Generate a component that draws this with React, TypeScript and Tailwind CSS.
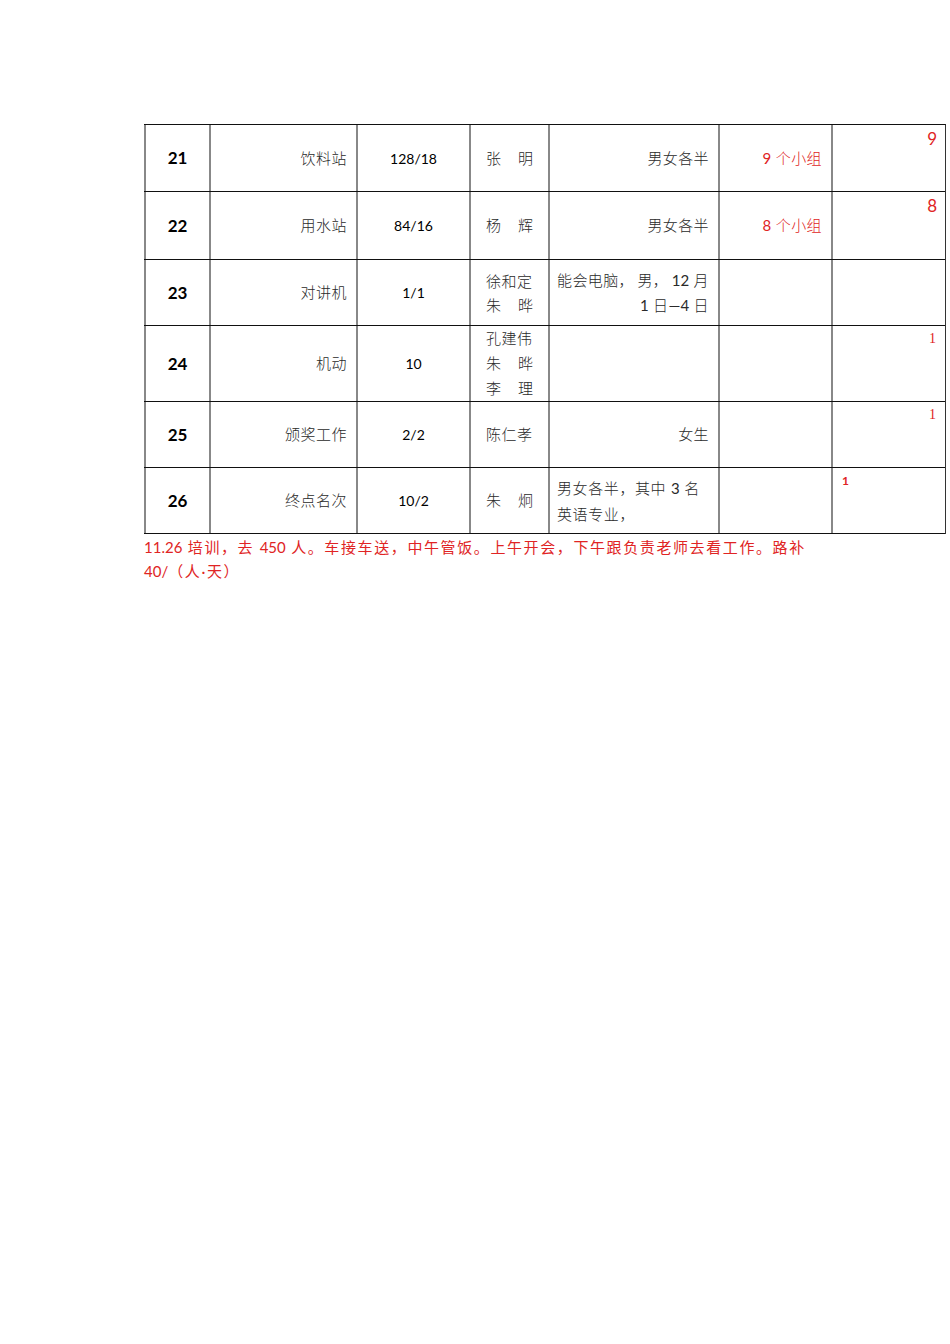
const CJK = "font-['Lato','Noto_Sans_CJK_SC',sans-serif]";

const cols = "grid grid-cols-[65px_147px_113px_79px_170px_113px_114px]";

function Name({ a, b }: { a: string; b?: string }) {
  if (!b) return <div className="w-[48px] tracking-[0.5px]">{a}</div>;
  return (
    <div className="flex w-[47px] justify-between">
      <span>{a}</span>
      <span>{b}</span>
    </div>
  );
}

// digits keep the regular weight and no extra tracking
function N({ children }: { children: React.ReactNode }) {
  return <span className="font-normal tracking-normal">{children}</span>;
}

type Row = {
  no: string;
  post: string;
  count: string;
  names: React.ReactNode;
  note: React.ReactNode;
  groups?: React.ReactNode;
  tag?: React.ReactNode;
  h: string;
};

const redNum = "pr-[8px] pt-[5px] text-right text-[17px] leading-none text-[#e02424]";
const redSerif =
  "pr-[9px] pt-[6px] text-right font-['Liberation_Serif',serif] text-[14px] leading-none text-[#e02424]";

const rows: Row[] = [
  {
    no: "21",
    post: "饮料站",
    count: "128/18",
    names: <Name a="张" b="明" />,
    note: <div className="text-right">男女各半</div>,
    groups: (
      <>
        <N>9</N> 个小组
      </>
    ),
    tag: <div className={redNum}>9</div>,
    h: "h-[67px]",
  },
  {
    no: "22",
    post: "用水站",
    count: "84/16",
    names: <Name a="杨" b="辉" />,
    note: <div className="text-right">男女各半</div>,
    groups: (
      <>
        <N>8</N> 个小组
      </>
    ),
    tag: <div className={redNum}>8</div>,
    h: "h-[68px]",
  },
  {
    no: "23",
    post: "对讲机",
    count: "1/1",
    names: (
      <div className="leading-[24px]">
        <Name a="徐和定" />
        <Name a="朱" b="晔" />
      </div>
    ),
    note: (
      <div className="leading-[25px]">
        <div className="flex justify-between">
          <span>能会电脑，</span>
          <span>男，</span>
          <span>
            <N>12</N> 月
          </span>
        </div>
        <div className="text-right">
          <N>1</N> 日<N>—4</N> 日
        </div>
      </div>
    ),
    h: "h-[66px]",
  },
  {
    no: "24",
    post: "机动",
    count: "10",
    names: (
      <div className="leading-[25px]">
        <Name a="孔建伟" />
        <Name a="朱" b="晔" />
        <Name a="李" b="理" />
      </div>
    ),
    note: null,
    tag: <div className={redSerif}>1</div>,
    h: "h-[76px]",
  },
  {
    no: "25",
    post: "颁奖工作",
    count: "2/2",
    names: <Name a="陈仁孝" />,
    note: <div className="text-right">女生</div>,
    tag: <div className={redSerif}>1</div>,
    h: "h-[66px]",
  },
  {
    no: "26",
    post: "终点名次",
    count: "10/2",
    names: <Name a="朱" b="炯" />,
    note: (
      <div className="leading-[26px] tracking-[0.6px]">
        <div>
          男女各半，其中 <N>3</N> 名
        </div>
        <div>英语专业，</div>
      </div>
    ),
    tag: <div className="pl-[9px] pt-[7px] text-[12px] font-bold leading-none text-[#e02424]">1</div>,
    h: "h-[66px]",
  },
];

export default function App() {
  return (
    <div className={`min-h-[1344px] w-[950px] bg-white pl-[144px] pt-[124px] text-[15px] text-[#2a2a2a] ${CJK}`}>
      <div className="w-[802px] border-t border-r border-t-[#111] border-r-[#333]">
        {rows.map((r) => (
          <div key={r.no} className={`${cols} ${r.h} border-b border-[#111]`}>
            <div className="flex items-center justify-center border-l-2 border-[#888] text-[17px] font-bold text-black">
              {r.no}
            </div>
            <div className="flex items-center justify-end border-l-2 border-[#888] pr-[9px] font-light tracking-[0.5px]">
              {r.post}
            </div>
            <div className="flex items-center justify-center border-l-2 border-[#888] text-[14px] text-black">
              {r.count}
            </div>
            <div className="flex items-center border-l-2 border-[#888] pl-[15px] font-light">{r.names}</div>
            <div className="flex items-center border-l-2 border-[#888] pl-[7px] pr-[9px] font-light">
              <div className="w-full tracking-[0.4px]">{r.note}</div>
            </div>
            <div className="flex items-center justify-end border-l-2 border-[#888] pr-[9px] font-light tracking-[0.4px] text-[#e02424]">
              <span>{r.groups}</span>
            </div>
            <div className="border-l-2 border-[#888]">{r.tag}</div>
          </div>
        ))}
      </div>
      <div className="pt-[1px] leading-[24px] tracking-[1.6px] whitespace-nowrap text-[#e02424]">
        <N>11.26</N> 培训，去 <N>450</N> 人。车接车送，中午管饭。上午开会，下午跟负责老师去看工作。路补
        <br />
        <N>40/</N>（人·天）
      </div>
    </div>
  );
}
